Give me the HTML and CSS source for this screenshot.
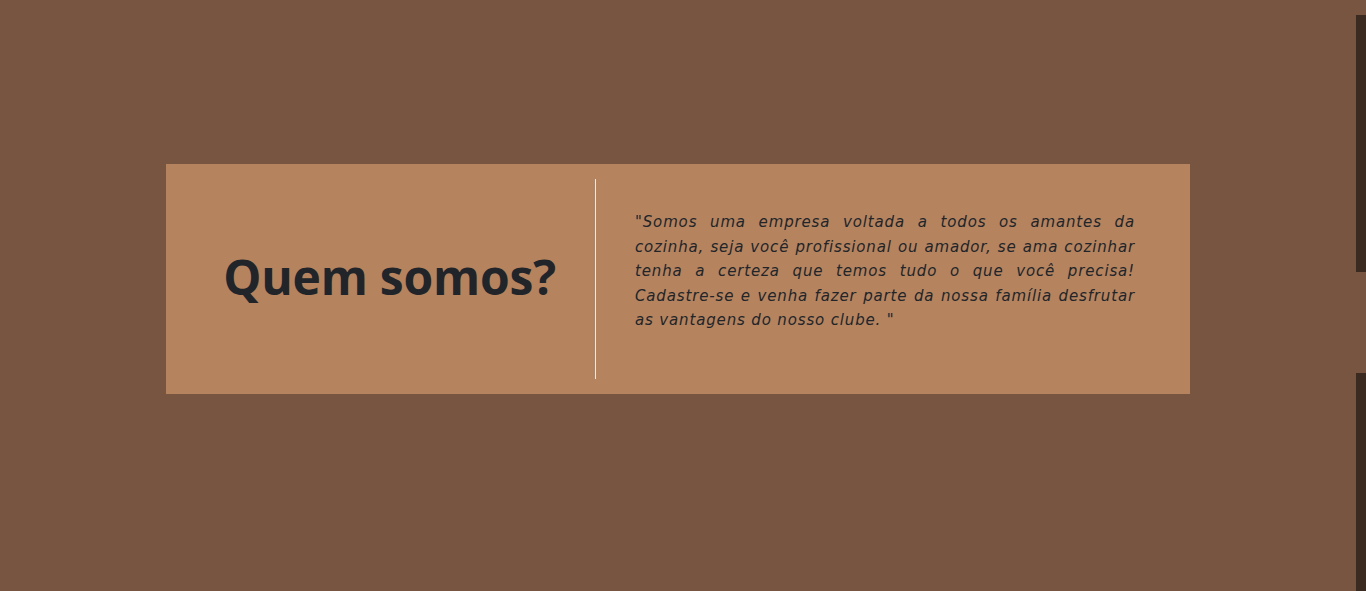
FILE: index.html
```html
<!DOCTYPE html>
<html lang="pt-BR">
<head>
<meta charset="utf-8">
<title>Quem somos</title>
<link rel="stylesheet" href="styles.css">
</head>
<body>
<div class="page">
  <section class="about">
    <div class="about-title">
      <h2>Quem somos?</h2>
    </div>
    <div class="about-divider"></div>
    <div class="about-text">
      <p>"Somos uma empresa voltada a todos os amantes da cozinha, seja você profissional ou amador, se ama cozinhar tenha a certeza que temos tudo o que você precisa! Cadastre-se e venha fazer parte da nossa família desfrutar as vantagens do nosso clube. "</p>
    </div>
  </section>
</div>
<div class="edge edge-top"></div>
<div class="edge edge-bottom"></div>
</body>
</html>
```

FILE: styles.css
```css
html, body {
  margin: 0;
  padding: 0;
  height: 100%;
  overflow: hidden;
}
body {
  background: #775541;
  font-family: "Open Sans", "DejaVu Sans", sans-serif;
  color: #212529;
}
.page {
  width: 1356px;
  display: flex;
  justify-content: center;
  padding-top: 164px;
}
.about {
  width: 1024px;
  height: 230px;
  background: #b6835f;
  display: grid;
  grid-template-columns: 429px 1px 1fr;
}
.about-title {
  display: flex;
  align-items: center;
  justify-content: center;
  padding-left: 18px;
  padding-bottom: 6px;
}
.about-title h2 {
  margin: 0;
  font-family: "Open Sans", sans-serif;
  font-size: 48px;
  font-weight: 700;
  letter-spacing: -0.2px;
}
.about-divider {
  background: #f3e6dc;
  margin: 15px 0;
}
.about-text {
  padding: 46px 55px 0 39px;
}
.about-text p {
  margin: 0;
  font-family: "DejaVu Sans", sans-serif;
  font-style: italic;
  font-size: 15px;
  line-height: 24.5px;
  text-align: justify;
  letter-spacing: 0.85px;
}
.edge {
  position: absolute;
  right: 0;
  width: 10px;
  background: #3a2a20;
}
.edge-top {
  top: 15px;
  height: 257px;
}
.edge-bottom {
  top: 373px;
  bottom: 0;
}
```
